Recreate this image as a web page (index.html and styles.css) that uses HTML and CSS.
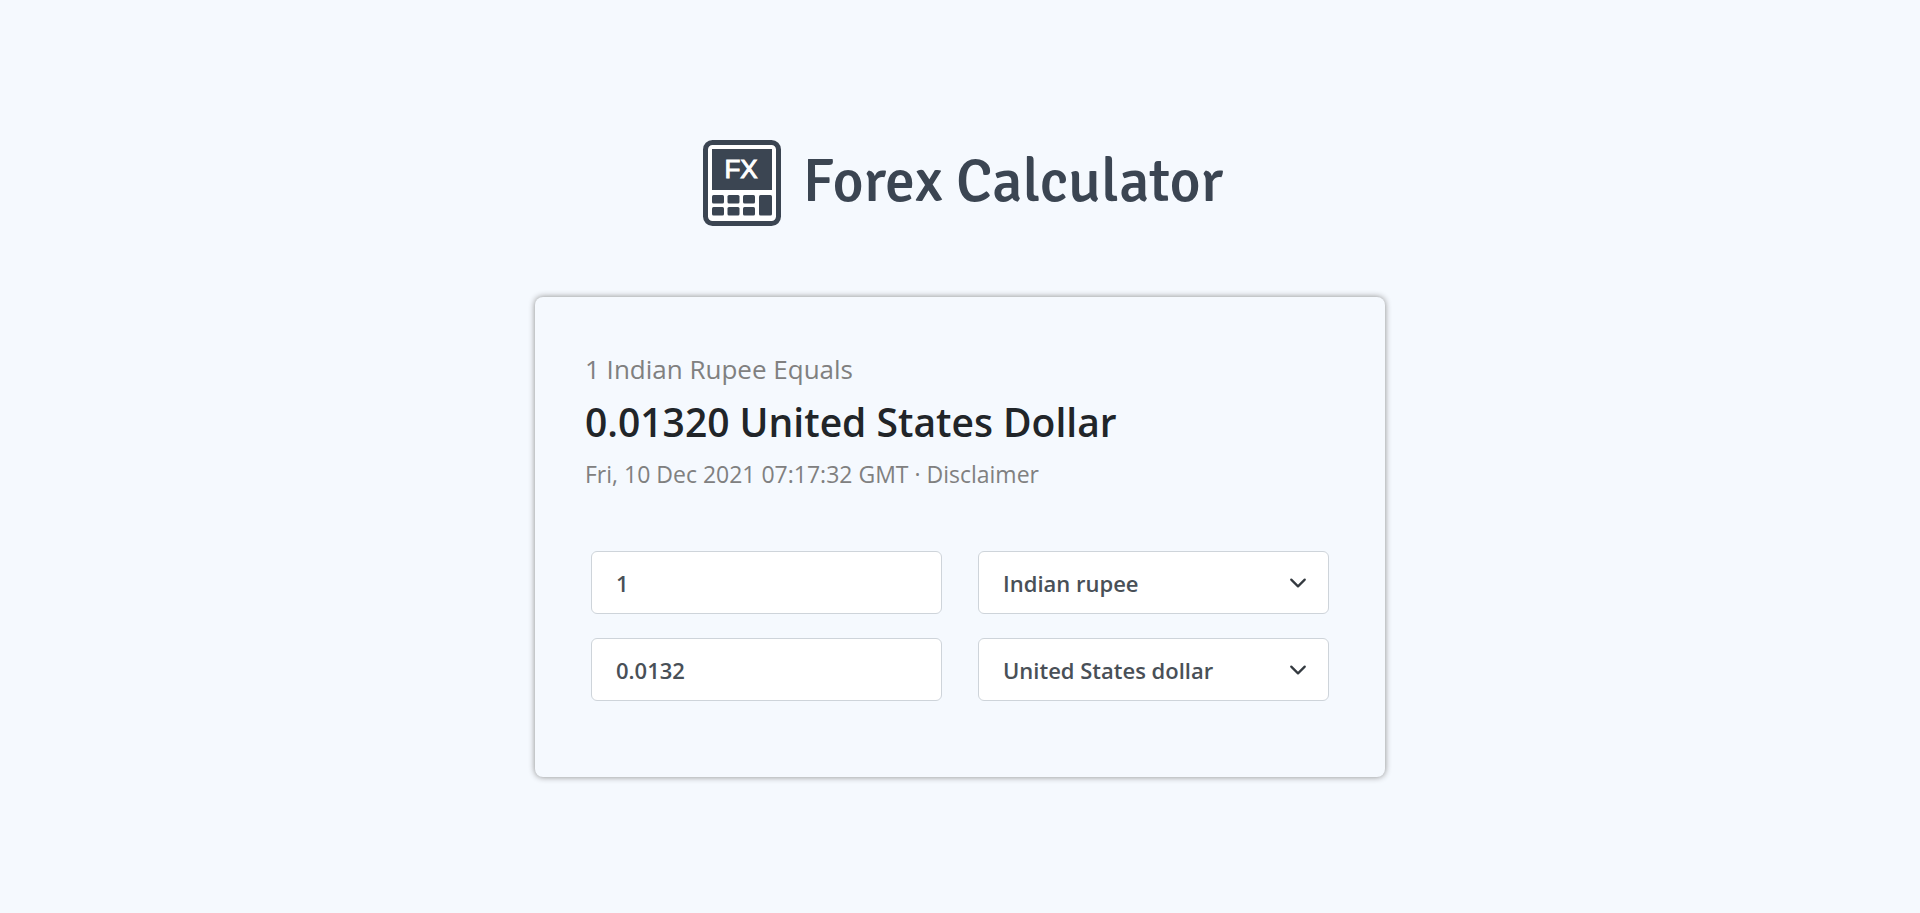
FILE: index.html
```html
<!DOCTYPE html>
<html lang="en">
<head>
<meta charset="utf-8">
<meta name="viewport" content="width=device-width, initial-scale=1">
<title>Forex Calculator</title>
<link rel="stylesheet" href="styles.css">
</head>
<body>
<main class="page">
  <header class="brand">
    <svg class="brand-icon" viewBox="0 0 78 86" aria-hidden="true">
      <rect x="2.5" y="2.5" width="73" height="81" rx="7" fill="#fff" stroke="#3b4552" stroke-width="5"/>
      <g fill="#3b4552">
        <rect x="9" y="9" width="60" height="41"/>
        <rect x="9" y="55" width="12" height="8.500" rx="1.500"/>
        <rect x="24.500" y="55" width="12" height="8.500" rx="1.500"/>
        <rect x="40" y="55" width="12" height="8.500" rx="1.500"/>
        <rect x="9" y="67" width="12" height="8.500" rx="1.500"/>
        <rect x="24.500" y="67" width="12" height="8.500" rx="1.500"/>
        <rect x="40" y="67" width="12" height="8.500" rx="1.500"/>
        <rect x="56" y="55" width="13" height="20.500" rx="1.500"/>
      </g>
      <text class="brand-mark" x="38" y="38" text-anchor="middle">FX</text>
    </svg>
    <h1 class="brand-name">Forex Calculator</h1>
  </header>
  <section class="card">
    <p class="from">1 Indian Rupee Equals</p>
    <h2 class="result">0.01320 United States Dollar</h2>
    <p class="date">Fri, 10 Dec 2021 07:17:32 GMT · <a class="link" href="#">Disclaimer</a></p>
    <form class="fields">
      <input class="field" type="text" inputmode="decimal" value="1" aria-label="Amount to convert">
      <div class="picker">
        <select class="field" aria-label="Source currency"><option>Indian rupee</option><option>United States dollar</option></select>
        <svg class="chevron" viewBox="0 0 16 16" aria-hidden="true"><path d="M2 5l6 6 6-6"/></svg>
      </div>
      <input class="field" type="text" inputmode="decimal" value="0.0132" aria-label="Converted amount">
      <div class="picker">
        <select class="field" aria-label="Target currency"><option>United States dollar</option><option>Indian rupee</option></select>
        <svg class="chevron" viewBox="0 0 16 16" aria-hidden="true"><path d="M2 5l6 6 6-6"/></svg>
      </div>
    </form>
  </section>
</main>
</body>
</html>
```
FILE: styles.css
```css
* { box-sizing: border-box; }
body {
  margin: 0;
  min-height: 100vh;
  background: #f5f9fe;
  color: #212529;
  font-family: "Segoe UI", "Open Sans", "Noto Sans", sans-serif;
}
.page {
  display: flex;
  flex-direction: column;
  align-items: center;
  gap: 70px;
  padding: 138px 24px 48px;
}
.brand {
  display: flex;
  align-items: center;
  gap: 22px;
  padding-left: 6px;
}
.brand-icon { width: 78px; height: 86px; flex: none; }
.brand-mark {
  font: 26px "Liberation Sans", Arial, sans-serif;
  fill: #fff;
  stroke: #fff;
  stroke-width: 1px;
}
.brand-name {
  margin: 0;
  color: #3b4552;
  font: 500 60px/89px Signika, Roboto, sans-serif;
}
.card {
  width: 100%;
  max-width: 850px;
  padding: 51px 50px 76px;
  border-radius: 8px;
  box-shadow: 0 0 6px #888;
}
.from, .result, .date { margin: 0; }
.from { color: #808080; font-size: 26px; line-height: 42px; }
.result { font-size: 39px; font-weight: 600; line-height: 63px; }
.date { color: #808080; font-size: 23px; line-height: 42px; }
.link { color: inherit; text-decoration: none; }
.fields {
  display: grid;
  grid-template-columns: 1fr 1fr;
  gap: 24px 36px;
  margin: 56px 6px 0;
}
.field {
  display: block;
  width: 100%;
  height: 63px;
  padding: 0 24px;
  border: 1px solid #ced4da;
  border-radius: 6px;
  background: #fff;
  color: #495057;
  font: inherit;
  font-size: 22px;
  font-weight: 600;
  appearance: none;
}
.picker { position: relative; }
.chevron {
  position: absolute;
  top: 23px;
  right: 22px;
  width: 18px;
  height: 18px;
  fill: none;
  stroke: #343a40;
  stroke-width: 2;
  stroke-linecap: round;
  stroke-linejoin: round;
  pointer-events: none;
}
```
